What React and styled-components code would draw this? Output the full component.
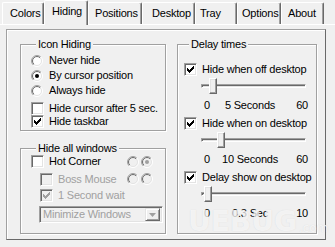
import React from "react";
import styled, { createGlobalStyle } from "styled-components";

const FACE = "#f0f0f0";
const SHADOW = "#a0a0a0";
const DARK = "#696969";
const LIGHT = "#e3e3e3";
const HI = "#ffffff";
const GRAYTEXT = "#a0a0a0";

const GlobalStyle = createGlobalStyle`
  html, body { margin: 0; padding: 0; background: ${FACE}; }
  * { box-sizing: border-box; }
`;

const Window = styled.div`
  position: relative;
  width: 335px;
  height: 247px;
  overflow: hidden;
  background: ${FACE};
  font-family: "Liberation Sans", Arial, sans-serif;
  font-size: 11px;
  letter-spacing: -0.2px;
  color: #000;
  display: flex;
  flex-direction: column;
`;

const TabStrip = styled.div`
  display: flex;
  align-items: flex-end;
  height: 24px;
  padding-left: 2px;
  position: relative;
  z-index: 1;
`;

const Tab = styled.div`
  width: ${(p) => p.$w}px;
  height: ${(p) => (p.$active ? 25 : 22)}px;
  margin-bottom: ${(p) => (p.$active ? -1 : 0)}px;
  padding: 4px 0 0 ${(p) => p.$pad}px;
  line-height: 13px;
  white-space: nowrap;
  background: ${FACE};
  border-top: 1px solid ${HI};
  border-left: 1px solid ${HI};
  border-right: 1px solid ${DARK};
  box-shadow: inset -1px 0 0 ${SHADOW};
  border-radius: 2px 2px 0 0;
`;

const Panel = styled.div`
  flex: 1;
  border-top: 1px solid ${HI};
  padding: 4px 9px 7px 6px;
  display: flex;
`;

const Frame = styled.div`
  flex: 1;
  border: 1px solid ${SHADOW};
  border-right-color: ${DARK};
  border-bottom-color: ${DARK};
  box-shadow: inset 1px 1px 0 ${HI};
  padding: 7px 8px 5px 13px;
  display: grid;
  grid-template-columns: 146px 1fr;
  column-gap: 11px;
`;

const Column = styled.div`
  display: flex;
  flex-direction: column;
  gap: 10px;
`;

const Group = styled.fieldset`
  margin: 0;
  min-width: 0;
  height: ${(p) => p.$h}px;
  padding: ${(p) => p.$pt}px 0 0 ${(p) => p.$pl}px;
  border: 1px solid ${SHADOW};
  box-shadow: inset 1px 1px 0 ${HI}, 1px 1px 0 ${HI};
  display: flex;
  flex-direction: column;
`;

const Legend = styled.legend`
  margin-left: 5px;
  padding: 0 2px;
  line-height: 14px;
  height: 14px;
  background: ${FACE};
  position: relative;
`;

const Option = styled.label`
  display: flex;
  align-items: center;
  gap: ${(p) => p.$gap ?? 5}px;
  height: ${(p) => p.$h}px;
  margin-left: ${(p) => p.$indent ?? 0}px;
  margin-top: ${(p) => p.$mt ?? 0}px;
  color: ${(p) => (p.$disabled ? GRAYTEXT : "#000")};
  white-space: nowrap;
  line-height: 13px;
`;

const Box = styled.span`
  width: 13px;
  height: 13px;
  flex: none;
  display: inline-flex;
  align-items: center;
  justify-content: center;
  border-top: 1px solid ${SHADOW};
  border-left: 1px solid ${SHADOW};
  border-right: 1px solid ${HI};
  border-bottom: 1px solid ${HI};
  box-shadow: inset 1px 1px 0 ${DARK}, inset -1px -1px 0 ${LIGHT};
  background: ${(p) => (p.$disabled ? FACE : HI)};
`;

const RadioWrap = styled.span`
  width: ${(p) => p.$w ?? 13}px;
  height: 12px;
  flex: none;
  display: inline-flex;
`;

const CHECK_COLS = [3, 4, 5, 4, 3, 2, 1];

function CheckBox({ checked, disabled }) {
  return (
    <Box $disabled={disabled}>
      {checked && (
        <svg width="9" height="9" viewBox="0 0 9 9">
          {CHECK_COLS.map((top, i) => (
            <rect key={i} x={i + 1} y={top} width="1" height="3" fill={disabled ? GRAYTEXT : "#000"} />
          ))}
        </svg>
      )}
    </Box>
  );
}

function Radio({ checked, disabled, w }) {
  return (
    <RadioWrap $w={w}>
      <svg width="12" height="12" viewBox="0 0 12 12">
        <defs>
          <linearGradient id="rgOuter" x1="0" y1="0" x2="1" y2="1">
            <stop offset="0.5" stopColor={SHADOW} />
            <stop offset="0.5" stopColor={HI} />
          </linearGradient>
          <linearGradient id="rgInner" x1="0" y1="0" x2="1" y2="1">
            <stop offset="0.5" stopColor={DARK} />
            <stop offset="0.5" stopColor={LIGHT} />
          </linearGradient>
        </defs>
        <circle cx="6" cy="6" r="5.5" fill="none" stroke="url(#rgOuter)" strokeWidth="1" />
        <circle cx="6" cy="6" r="4.5" fill={disabled ? FACE : HI} stroke="url(#rgInner)" strokeWidth="1" />
        {checked && <circle cx="6" cy="6" r="2" fill={disabled ? GRAYTEXT : "#000"} />}
      </svg>
    </RadioWrap>
  );
}

const RowBetween = styled.div`
  display: flex;
  align-items: center;
  justify-content: space-between;
  padding-right: ${(p) => p.$pr}px;
  margin-top: ${(p) => p.$mt ?? 0}px;
`;

const RadioPair = styled.div`
  display: flex;
  gap: 2px;
`;

const Combo = styled.div`
  display: flex;
  align-items: center;
  height: 17px;
  margin: 4px 2px 0 8px;
  border-top: 1px solid ${SHADOW};
  border-left: 1px solid ${SHADOW};
  border-right: 1px solid ${HI};
  border-bottom: 1px solid ${HI};
  box-shadow: inset 1px 1px 0 ${DARK}, inset -1px -1px 0 ${LIGHT};
  background: ${FACE};
  padding: 2px 2px 2px 3px;
  color: ${GRAYTEXT};
  line-height: 13px;
`;

const ComboText = styled.span`
  flex: 1;
  white-space: nowrap;
`;

const ComboButton = styled.span`
  width: 15px;
  height: 13px;
  display: inline-flex;
  align-items: center;
  justify-content: center;
  background: ${FACE};
  border-top: 1px solid ${LIGHT};
  border-left: 1px solid ${LIGHT};
  border-right: 1px solid ${DARK};
  border-bottom: 1px solid ${DARK};
  box-shadow: inset 1px 1px 0 ${HI}, inset -1px -1px 0 ${SHADOW};
`;

const SliderRow = styled.div`
  position: relative;
  width: 105px;
  height: 20px;
  margin-left: 17px;
  display: flex;
  align-items: center;
`;

const Track = styled.div`
  width: 100%;
  height: 4px;
  border-top: 1px solid ${SHADOW};
  border-left: 1px solid ${SHADOW};
  border-right: 1px solid ${HI};
  border-bottom: 1px solid ${HI};
  box-shadow: inset 1px 1px 0 ${DARK}, inset -1px -1px 0 ${LIGHT};
`;

const Thumb = styled.div`
  position: absolute;
  top: 2px;
  width: 8px;
  height: 16px;
  background: ${FACE};
  border-top: 1px solid ${HI};
  border-left: 1px solid ${HI};
  border-right: 1px solid ${DARK};
  border-bottom: 1px solid ${DARK};
  box-shadow: inset -1px -1px 0 ${SHADOW}, inset 1px 1px 0 ${LIGHT};
`;

const Scale = styled.div`
  display: flex;
  align-items: center;
  width: 104px;
  height: 18px;
  margin-left: 20px;
  margin-bottom: 2px;
  line-height: 13px;
  white-space: nowrap;
`;

const ScaleMid = styled.span`
  flex: 1;
  text-align: center;
  padding-right: 6px;
`;

const Watermark = styled.div`
  position: absolute;
  left: 188px;
  top: 207px;
  display: flex;
  align-items: flex-end;
  font-family: "DejaVu Sans", sans-serif;
  font-weight: bold;
  font-size: 28px;
  letter-spacing: 0;
  color: rgba(255, 255, 255, 0.7);
  text-shadow: 0 0 1px rgba(160, 160, 160, 0.3);
  pointer-events: none;
  line-height: 30px;
`;

const WatermarkDomain = styled.span`
  font-size: 12px;
  font-weight: normal;
  line-height: 14px;
  margin-left: 2px;
  margin-bottom: 2px;
`;

function Delay({ label, value, max, min, mid, maxLabel }) {
  const pos = Math.round((value / max) * (105 - 8));
  return (
    <>
      <Option $h={14} $gap={5}>
        <CheckBox checked />
        {label}
      </Option>
      <SliderRow>
        <Track />
        <Thumb style={{ left: pos }} />
      </SliderRow>
      <Scale>
        <span>{min}</span>
        <ScaleMid>{mid}</ScaleMid>
        <span>{maxLabel}</span>
      </Scale>
    </>
  );
}

const TABS = [
  { name: "Colors", w: 42, pad: 7 },
  { name: "Hiding", w: 44, pad: 7, active: true },
  { name: "Positions", w: 54, pad: 6 },
  { name: "Desktop", w: 53, pad: 9 },
  { name: "Tray", w: 42, pad: 4 },
  { name: "Options", w: 44, pad: 4 },
  { name: "About", w: 43, pad: 6 },
];

export default function App() {
  return (
    <Window>
      <GlobalStyle />
      <TabStrip>
        {TABS.map((t) => (
          <Tab key={t.name} $w={t.w} $pad={t.pad} $active={t.active}>
            {t.name}
          </Tab>
        ))}
      </TabStrip>
      <Panel>
        <Frame>
          <Column>
            <Group $h={94} $pt={2} $pl={10}>
              <Legend>Icon Hiding</Legend>
              <Option $h={15} $gap={5}>
                <Radio /> Never hide
              </Option>
              <Option $h={15} $gap={5}>
                <Radio checked /> By cursor position
              </Option>
              <Option $h={15} $gap={5}>
                <Radio /> Always hide
              </Option>
              <Option $h={13} $mt={4}>
                <CheckBox /> Hide cursor after 5 sec.
              </Option>
              <Option $h={13}>
                <CheckBox checked /> Hide taskbar
              </Option>
            </Group>
            <Group $h={93} $pt={0} $pl={10}>
              <Legend>Hide all windows</Legend>
              <RowBetween $pr={12}>
                <Option $h={13}>
                  <CheckBox /> Hot Corner
                </Option>
                <RadioPair>
                  <Radio disabled w={12} />
                  <Radio disabled checked w={12} />
                </RadioPair>
              </RowBetween>
              <RowBetween $pr={12} $mt={4}>
                <Option $h={14} $indent={9} $disabled>
                  <CheckBox disabled /> Boss Mouse
                </Option>
                <RadioPair>
                  <Radio disabled w={12} />
                  <Radio disabled w={12} />
                </RadioPair>
              </RowBetween>
              <Option $h={14} $indent={9} $mt={2} $disabled>
                <CheckBox disabled checked /> 1 Second wait
              </Option>
              <Combo>
                <ComboText>Minimize Windows</ComboText>
                <ComboButton>
                  <svg width="7" height="4" viewBox="0 0 7 4">
                    <path d="M0 0 H7 L3.5 4 Z" fill={SHADOW} />
                  </svg>
                </ComboButton>
              </Combo>
            </Group>
          </Column>
          <Group $h={197} $pt={11} $pl={6}>
            <Legend>Delay times</Legend>
            <Delay label="Hide when off desktop" value={5} max={60} min="0" mid="5 Seconds" maxLabel="60" />
            <Delay label="Hide when on desktop" value={10} max={60} min="0" mid="10 Seconds" maxLabel="60" />
            <Delay label="Delay show on desktop" value={0.3} max={10} min="0" mid="0.3 Sec" maxLabel="10" />
          </Group>
        </Frame>
      </Panel>
      <Watermark>
        UEBUG<WatermarkDomain>.com</WatermarkDomain>
      </Watermark>
    </Window>
  );
}
